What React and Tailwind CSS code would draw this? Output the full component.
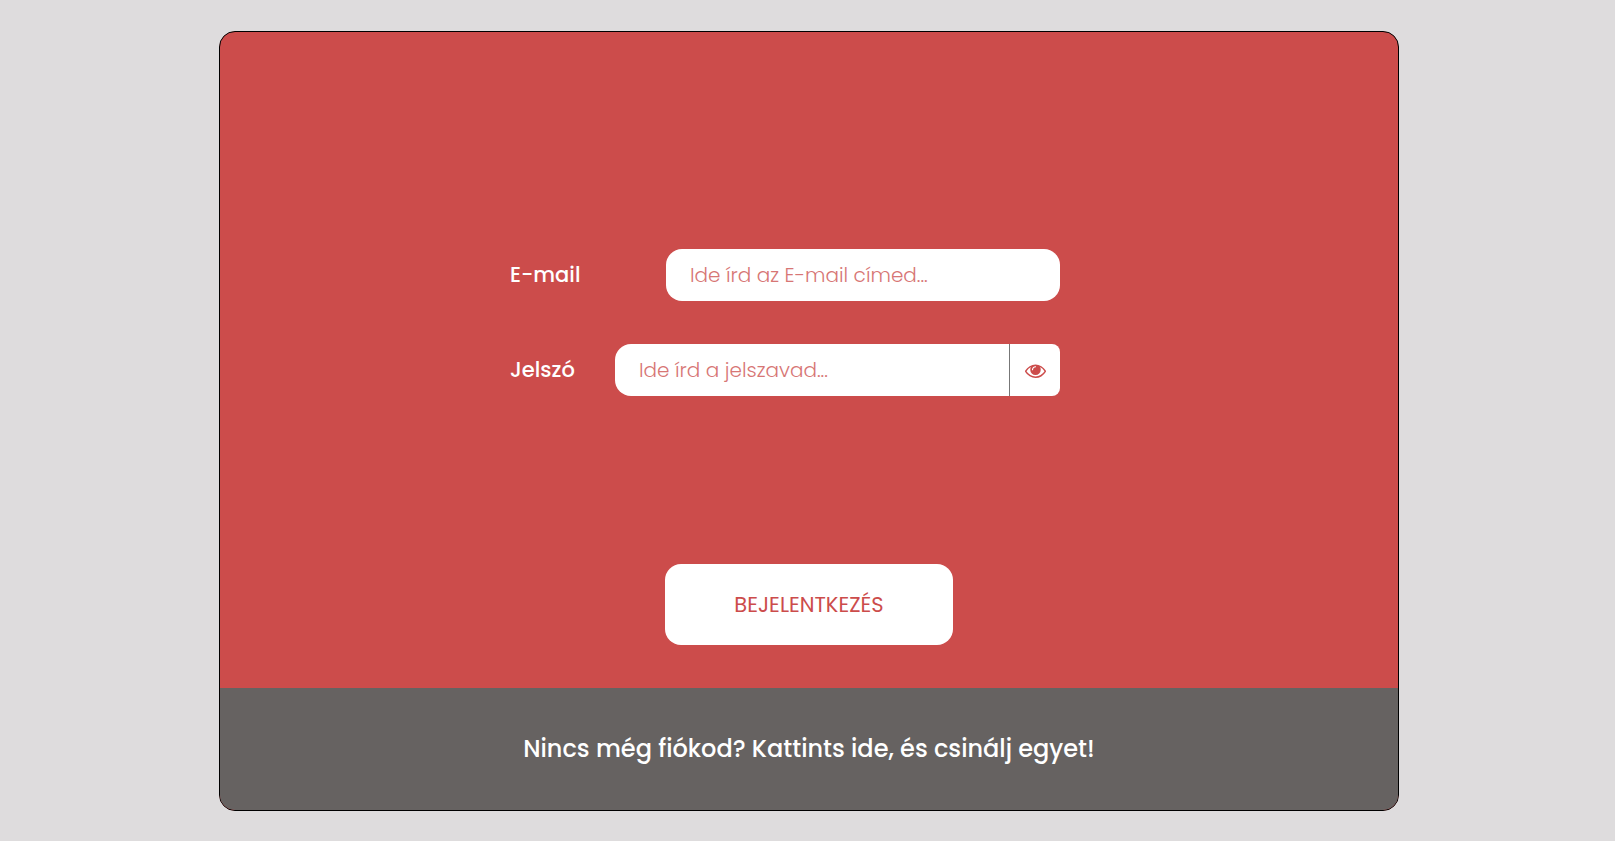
import { useState } from "react";

function EyeIcon() {
  return (
    <svg viewBox="0 0 1792 1792" className="size-[21px] fill-current" aria-hidden="true">
      <path d="M1664 960q-152-236-381-353 61 104 61 225 0 185-131.5 316.5t-316.5 131.5-316.5-131.5-131.5-316.5q0-121 61-225-229 117-381 353 133 205 333.5 326.5t434.5 121.5 434.5-121.5 333.5-326.5zm-720-384q0-20-14-34t-34-14q-125 0-214.5 89.5t-89.5 214.5q0 20 14 34t34 14 34-14 14-34q0-86 61-147t147-61q20 0 34-14t14-34zm848 384q0 34-20 69-140 230-376.5 368.5t-499.5 138.5-499.5-139-376.5-368q-20-35-20-69t20-69q140-229 376.5-368t499.5-139 499.5 139 376.5 368q20 35 20 69z" />
    </svg>
  );
}

const fieldClass =
  "h-[52px] w-[394px] min-w-0 bg-white px-6 text-xl font-light text-[#cc4c4b] outline-none placeholder:text-[#d77675] placeholder:opacity-100";

export default function App() {
  const [visible, setVisible] = useState(false);

  return (
    <div className="min-h-screen bg-[#dedcdd] pt-[31px] pb-[30px] pl-[3px] font-['Poppins','Inter',sans-serif]">
      <main className="mx-auto w-full max-w-[1180px] overflow-hidden rounded-2xl border border-black bg-[#cc4c4b]">
        <form className="flex flex-col items-center px-4 pt-[217px] pb-[43px]" onSubmit={(e) => e.preventDefault()}>
          <div className="mr-12 flex w-[550px] max-w-full flex-col gap-[43px]">
            <div className="flex items-center justify-between">
              <label htmlFor="email" className="text-[21px] font-medium text-white">E-mail</label>
              <input id="email" type="email" placeholder="Ide írd az E-mail címed..." className={`${fieldClass} rounded-2xl`} />
            </div>
            <div className="flex items-center justify-between">
              <label htmlFor="password" className="text-[21px] font-medium text-white">Jelszó</label>
              <div className="flex">
                <input
                  id="password"
                  type={visible ? "text" : "password"}
                  placeholder="Ide írd a jelszavad..."
                  className={`${fieldClass} rounded-l-2xl`}
                />
                <button
                  type="button"
                  aria-label="Jelszó megjelenítése"
                  onClick={() => setVisible(!visible)}
                  className="flex w-[51px] items-center justify-center rounded-r-lg border-l border-[#777777] bg-white text-[#cc4c4b]"
                >
                  <EyeIcon />
                </button>
              </div>
            </div>
          </div>
          <button type="submit" className="mt-[168px] h-[81px] w-[288px] rounded-2xl bg-white text-[21px] text-[#cc4c4b]">
            BEJELENTKEZÉS
          </button>
        </form>
        <footer className="flex h-[122px] items-center justify-center bg-[#666261]">
          <a href="#register" className="text-2xl font-medium text-white">
            Nincs még fiókod? Kattints ide, és csinálj egyet!
          </a>
        </footer>
      </main>
    </div>
  );
}
